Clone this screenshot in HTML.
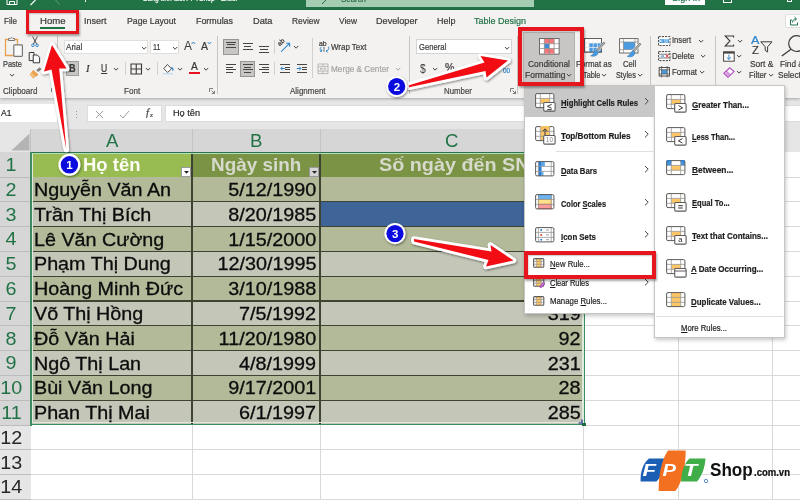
<!DOCTYPE html>
<html lang="vi"><head><meta charset="utf-8"><title>Excel - Conditional Formatting</title>
<style>
html,body{margin:0;padding:0;background:#fff}
#app{position:relative;width:800px;height:500px;overflow:hidden;background:#fff;will-change:transform;font-family:"Liberation Sans",sans-serif}
#app div{box-sizing:border-box}
u{text-decoration:underline;text-underline-offset:1px}
</style></head><body><div id="app">
<div style="position:absolute;left:0px;top:97px;width:800px;height:32px;background:#e6e6e6;"></div>
<div style="position:absolute;left:0px;top:0px;width:800px;height:10px;background:#217346;"></div>
<div style="position:absolute;left:306px;top:0px;width:228px;height:7px;background:#a5cdb4;"></div>
<div style="position:absolute;left:665px;top:0px;width:40px;height:4.5px;background:#fff;"></div>
<div style="position:absolute;left:0px;top:10px;width:800px;height:87.5px;background:#f3f2f1;box-shadow:0 1px 3px rgba(0,0,0,.28);"></div>
<div style="position:absolute;left:0px;top:104px;width:57px;height:18px;background:#fff;"></div>
<div style="position:absolute;left:87px;top:105px;width:75px;height:17px;background:#fff;border:1px solid #dcdcdc;"></div>
<div style="position:absolute;left:165px;top:105px;width:640px;height:17px;background:#fff;border:1px solid #dcdcdc;"></div>
<div style="position:absolute;top:108.37px;font-size:9.6px;line-height:9.6px;color:#2b2a29;white-space:nowrap;-webkit-text-stroke:0.22px #2b2a29;left:1.00px;transform-origin:0 0;transform:scaleX(0.8942);">A1</div>
<div style="position:absolute;left:75.8px;top:110.5px;width:1.2px;height:1.2px;background:#9a9a9a;"></div>
<div style="position:absolute;left:75.8px;top:113.5px;width:1.2px;height:1.2px;background:#9a9a9a;"></div>
<div style="position:absolute;left:75.8px;top:116.5px;width:1.2px;height:1.2px;background:#9a9a9a;"></div>
<svg style="position:absolute;left:95px;top:110px;" width="9" height="9" viewBox="0 0 9 9"><path d="M1,1 L8,8 M8,1 L1,8" stroke="#9d9d9d" stroke-width="1" fill="none"/></svg>
<svg style="position:absolute;left:119px;top:110px;" width="11" height="9" viewBox="0 0 11 9"><path d="M1,5 L4,8 L10,1" stroke="#9d9d9d" stroke-width="1" fill="none"/></svg>
<div style="position:absolute;top:108.11px;font-size:10.5px;line-height:10.5px;color:#444;white-space:nowrap;-webkit-text-stroke:0.22px #444;font-style:italic;left:146.00px;transform-origin:0 0;transform:scaleX(1.0008);font-family:'Liberation Serif',serif;">f</div>
<div style="position:absolute;top:112.00px;font-size:6.5px;line-height:6.5px;color:#444;white-space:nowrap;-webkit-text-stroke:0.22px #444;font-style:italic;left:149.50px;transform-origin:0 0;transform:scaleX(1.0008);font-family:'Liberation Serif',serif;">x</div>
<div style="position:absolute;top:107.87px;font-size:9.6px;line-height:9.6px;color:#2b2a29;white-space:nowrap;-webkit-text-stroke:0.22px #2b2a29;left:173.00px;transform-origin:0 0;transform:scaleX(0.9546);">Họ tên</div>
<div style="position:absolute;left:0px;top:129px;width:800px;height:371px;background:#fff;"></div>
<div style="position:absolute;left:0px;top:129px;width:30.5px;height:23px;background:#e6e6e6;"></div>
<div style="position:absolute;left:30.5px;top:129px;width:553.0px;height:23px;background:#d6d6d6;"></div>
<div style="position:absolute;left:583.5px;top:129px;width:216.5px;height:23px;background:#e6e6e6;"></div>
<svg style="position:absolute;left:11px;top:133px;" width="19" height="18" viewBox="0 0 19 18"><polygon points="18.5,0.5 18.5,17.5 0.5,17.5" fill="#b4b4b4"/></svg>
<div style="position:absolute;left:30.0px;top:129px;width:1px;height:23px;background:#c3c3c3;"></div>
<div style="position:absolute;left:191.5px;top:129px;width:1px;height:23px;background:#c3c3c3;"></div>
<div style="position:absolute;left:319.5px;top:129px;width:1px;height:23px;background:#c3c3c3;"></div>
<div style="position:absolute;left:583.0px;top:129px;width:1px;height:23px;background:#c3c3c3;"></div>
<div style="position:absolute;left:677.5px;top:129px;width:1px;height:23px;background:#c3c3c3;"></div>
<div style="position:absolute;left:772.0px;top:129px;width:1px;height:23px;background:#c3c3c3;"></div>
<div style="position:absolute;top:132.46px;font-size:18.6px;line-height:18.6px;color:#217346;white-space:nowrap;left:105.60px;transform-origin:50% 0;transform:scaleX(1.0008);">A</div>
<div style="position:absolute;top:132.46px;font-size:18.6px;line-height:18.6px;color:#217346;white-space:nowrap;left:250.30px;transform-origin:50% 0;transform:scaleX(1.0008);">B</div>
<div style="position:absolute;top:132.46px;font-size:18.6px;line-height:18.6px;color:#217346;white-space:nowrap;left:445.28px;transform-origin:50% 0;transform:scaleX(1.0008);">C</div>
<div style="position:absolute;left:0px;top:152.2px;width:30.5px;height:272.8px;background:#d6d6d6;"></div>
<div style="position:absolute;left:0px;top:425.0px;width:30.5px;height:75.0px;background:#e6e6e6;"></div>
<div style="position:absolute;left:0px;top:176.5px;width:30.5px;height:1px;background:#bdbdbd;"></div>
<div style="position:absolute;top:156.02px;font-size:18.4px;line-height:18.4px;color:#217346;white-space:nowrap;left:6.38px;transform-origin:50% 0;transform:scaleX(1.075);">1</div>
<div style="position:absolute;left:0px;top:201.29999999999998px;width:30.5px;height:1px;background:#bdbdbd;"></div>
<div style="position:absolute;top:180.82px;font-size:18.4px;line-height:18.4px;color:#217346;white-space:nowrap;left:6.38px;transform-origin:50% 0;transform:scaleX(1.075);">2</div>
<div style="position:absolute;left:0px;top:226.1px;width:30.5px;height:1px;background:#bdbdbd;"></div>
<div style="position:absolute;top:205.62px;font-size:18.4px;line-height:18.4px;color:#217346;white-space:nowrap;left:6.38px;transform-origin:50% 0;transform:scaleX(1.075);">3</div>
<div style="position:absolute;left:0px;top:250.89999999999998px;width:30.5px;height:1px;background:#bdbdbd;"></div>
<div style="position:absolute;top:230.42px;font-size:18.4px;line-height:18.4px;color:#217346;white-space:nowrap;left:6.38px;transform-origin:50% 0;transform:scaleX(1.075);">4</div>
<div style="position:absolute;left:0px;top:275.7px;width:30.5px;height:1px;background:#bdbdbd;"></div>
<div style="position:absolute;top:255.22px;font-size:18.4px;line-height:18.4px;color:#217346;white-space:nowrap;left:6.38px;transform-origin:50% 0;transform:scaleX(1.075);">5</div>
<div style="position:absolute;left:0px;top:300.5px;width:30.5px;height:1px;background:#bdbdbd;"></div>
<div style="position:absolute;top:280.02px;font-size:18.4px;line-height:18.4px;color:#217346;white-space:nowrap;left:6.38px;transform-origin:50% 0;transform:scaleX(1.075);">6</div>
<div style="position:absolute;left:0px;top:325.29999999999995px;width:30.5px;height:1px;background:#bdbdbd;"></div>
<div style="position:absolute;top:304.82px;font-size:18.4px;line-height:18.4px;color:#217346;white-space:nowrap;left:6.38px;transform-origin:50% 0;transform:scaleX(1.075);">7</div>
<div style="position:absolute;left:0px;top:350.1px;width:30.5px;height:1px;background:#bdbdbd;"></div>
<div style="position:absolute;top:329.62px;font-size:18.4px;line-height:18.4px;color:#217346;white-space:nowrap;left:6.38px;transform-origin:50% 0;transform:scaleX(1.075);">8</div>
<div style="position:absolute;left:0px;top:374.9px;width:30.5px;height:1px;background:#bdbdbd;"></div>
<div style="position:absolute;top:354.42px;font-size:18.4px;line-height:18.4px;color:#217346;white-space:nowrap;left:6.38px;transform-origin:50% 0;transform:scaleX(1.075);">9</div>
<div style="position:absolute;left:0px;top:399.7px;width:30.5px;height:1px;background:#bdbdbd;"></div>
<div style="position:absolute;top:379.22px;font-size:18.4px;line-height:18.4px;color:#217346;white-space:nowrap;left:1.27px;transform-origin:50% 0;transform:scaleX(1.075);">10</div>
<div style="position:absolute;left:0px;top:424.5px;width:30.5px;height:1px;background:#bdbdbd;"></div>
<div style="position:absolute;top:404.02px;font-size:18.4px;line-height:18.4px;color:#217346;white-space:nowrap;left:1.95px;transform-origin:50% 0;transform:scaleX(1.075);">11</div>
<div style="position:absolute;left:0px;top:449.3px;width:30.5px;height:1px;background:#bdbdbd;"></div>
<div style="position:absolute;top:428.82px;font-size:18.4px;line-height:18.4px;color:#262626;white-space:nowrap;left:1.27px;transform-origin:50% 0;transform:scaleX(1.075);">12</div>
<div style="position:absolute;left:0px;top:474.1px;width:30.5px;height:1px;background:#bdbdbd;"></div>
<div style="position:absolute;top:453.62px;font-size:18.4px;line-height:18.4px;color:#262626;white-space:nowrap;left:1.27px;transform-origin:50% 0;transform:scaleX(1.075);">13</div>
<div style="position:absolute;left:0px;top:498.9px;width:30.5px;height:1px;background:#bdbdbd;"></div>
<div style="position:absolute;top:478.42px;font-size:18.4px;line-height:18.4px;color:#262626;white-space:nowrap;left:1.27px;transform-origin:50% 0;transform:scaleX(1.075);">14</div>
<div style="position:absolute;left:583.5px;top:176.5px;width:216.5px;height:1px;background:#d9d9d9;"></div>
<div style="position:absolute;left:583.5px;top:201.29999999999998px;width:216.5px;height:1px;background:#d9d9d9;"></div>
<div style="position:absolute;left:583.5px;top:226.1px;width:216.5px;height:1px;background:#d9d9d9;"></div>
<div style="position:absolute;left:583.5px;top:250.89999999999998px;width:216.5px;height:1px;background:#d9d9d9;"></div>
<div style="position:absolute;left:583.5px;top:275.7px;width:216.5px;height:1px;background:#d9d9d9;"></div>
<div style="position:absolute;left:583.5px;top:300.5px;width:216.5px;height:1px;background:#d9d9d9;"></div>
<div style="position:absolute;left:583.5px;top:325.29999999999995px;width:216.5px;height:1px;background:#d9d9d9;"></div>
<div style="position:absolute;left:583.5px;top:350.1px;width:216.5px;height:1px;background:#d9d9d9;"></div>
<div style="position:absolute;left:583.5px;top:374.9px;width:216.5px;height:1px;background:#d9d9d9;"></div>
<div style="position:absolute;left:583.5px;top:399.7px;width:216.5px;height:1px;background:#d9d9d9;"></div>
<div style="position:absolute;left:583.5px;top:424.5px;width:216.5px;height:1px;background:#d9d9d9;"></div>
<div style="position:absolute;left:583.5px;top:449.3px;width:216.5px;height:1px;background:#d9d9d9;"></div>
<div style="position:absolute;left:583.5px;top:474.1px;width:216.5px;height:1px;background:#d9d9d9;"></div>
<div style="position:absolute;left:583.5px;top:498.9px;width:216.5px;height:1px;background:#d9d9d9;"></div>
<div style="position:absolute;left:30.5px;top:449.3px;width:553.0px;height:1px;background:#d9d9d9;"></div>
<div style="position:absolute;left:30.5px;top:474.1px;width:553.0px;height:1px;background:#d9d9d9;"></div>
<div style="position:absolute;left:30.5px;top:498.9px;width:553.0px;height:1px;background:#d9d9d9;"></div>
<div style="position:absolute;left:677.5px;top:152px;width:1px;height:348px;background:#d9d9d9;"></div>
<div style="position:absolute;left:772.0px;top:152px;width:1px;height:348px;background:#d9d9d9;"></div>
<div style="position:absolute;left:191.5px;top:425.0px;width:1px;height:75.0px;background:#d9d9d9;"></div>
<div style="position:absolute;left:319.5px;top:425.0px;width:1px;height:75.0px;background:#d9d9d9;"></div>
<div style="position:absolute;left:583.0px;top:425.0px;width:1px;height:75.0px;background:#d9d9d9;"></div>
<div style="position:absolute;left:31px;top:152.2px;width:161px;height:24.8px;background:#98bc52;"></div>
<div style="position:absolute;left:192px;top:152.2px;width:391.5px;height:24.8px;background:#7a9345;"></div>
<div style="position:absolute;left:31px;top:177.0px;width:552.5px;height:25.0px;background:#b2ba99;"></div>
<div style="position:absolute;left:31px;top:201.79999999999998px;width:552.5px;height:25.0px;background:#c4c6b8;"></div>
<div style="position:absolute;left:31px;top:226.6px;width:552.5px;height:25.0px;background:#b2ba99;"></div>
<div style="position:absolute;left:31px;top:251.39999999999998px;width:552.5px;height:25.0px;background:#c4c6b8;"></div>
<div style="position:absolute;left:31px;top:276.2px;width:552.5px;height:25.0px;background:#b2ba99;"></div>
<div style="position:absolute;left:31px;top:301.0px;width:552.5px;height:25.0px;background:#c4c6b8;"></div>
<div style="position:absolute;left:31px;top:325.79999999999995px;width:552.5px;height:25.0px;background:#b2ba99;"></div>
<div style="position:absolute;left:31px;top:350.6px;width:552.5px;height:25.0px;background:#c4c6b8;"></div>
<div style="position:absolute;left:31px;top:375.4px;width:552.5px;height:25.0px;background:#b2ba99;"></div>
<div style="position:absolute;left:31px;top:400.2px;width:552.5px;height:25.0px;background:#c4c6b8;"></div>
<div style="position:absolute;left:320px;top:201.79999999999998px;width:263.5px;height:24.8px;background:#3e6498;"></div>
<div style="position:absolute;left:31px;top:201.2px;width:552.5px;height:1.2px;background:#3d4432;"></div>
<div style="position:absolute;left:31px;top:226.0px;width:552.5px;height:1.2px;background:#3d4432;"></div>
<div style="position:absolute;left:31px;top:250.79999999999998px;width:552.5px;height:1.2px;background:#3d4432;"></div>
<div style="position:absolute;left:31px;top:275.59999999999997px;width:552.5px;height:1.2px;background:#3d4432;"></div>
<div style="position:absolute;left:31px;top:300.4px;width:552.5px;height:1.2px;background:#3d4432;"></div>
<div style="position:absolute;left:31px;top:325.19999999999993px;width:552.5px;height:1.2px;background:#3d4432;"></div>
<div style="position:absolute;left:31px;top:350.0px;width:552.5px;height:1.2px;background:#3d4432;"></div>
<div style="position:absolute;left:31px;top:374.79999999999995px;width:552.5px;height:1.2px;background:#3d4432;"></div>
<div style="position:absolute;left:31px;top:399.59999999999997px;width:552.5px;height:1.2px;background:#3d4432;"></div>
<div style="position:absolute;left:191.4px;top:152.2px;width:1.3px;height:272.8px;background:#3d4432;"></div>
<div style="position:absolute;left:319.4px;top:152.2px;width:1.3px;height:272.8px;background:#3d4432;"></div>
<div style="position:absolute;left:32px;top:153.1px;width:550.2px;height:1.0px;background:#b4dfb6;"></div>
<div style="position:absolute;left:32px;top:154.1px;width:1.2px;height:269.40000000000003px;background:#dfe9dc;"></div>
<div style="position:absolute;left:32px;top:422.3px;width:550.2px;height:1.2px;background:#dfe9dc;"></div>
<div style="position:absolute;left:582.1px;top:154.1px;width:1.6px;height:269.40000000000003px;background:#dfe9dc;"></div>
<div style="position:absolute;left:30.2px;top:152.0px;width:554.8px;height:1.2px;background:#2c7450;"></div>
<div style="position:absolute;left:30.2px;top:152.0px;width:1.8px;height:273.5px;background:#3c8c61;"></div>
<div style="position:absolute;left:30.2px;top:423.6px;width:554.8px;height:1.8px;background:#3c8c61;"></div>
<div style="position:absolute;left:583.7px;top:152.0px;width:1.3px;height:273.5px;background:#3c8c61;"></div>
<div style="position:absolute;left:581.8px;top:422.8px;width:4px;height:3.6px;background:#1d6b41;"></div>
<svg style="position:absolute;left:577.5px;top:419.0px;" width="5" height="5" viewBox="0 0 5 5"><path d="M4,0.5 V4 H0.5" fill="none" stroke="#1f2f8f" stroke-width="1.2"/></svg>
<div style="position:absolute;top:156.22px;font-size:18.4px;line-height:18.4px;color:#fdfdf4;white-space:nowrap;font-weight:bold;left:82.75px;transform-origin:0 0;transform:scaleX(1.0045);">Họ tên</div>
<div style="position:absolute;top:156.22px;font-size:18.4px;line-height:18.4px;color:#d6d9cb;white-space:nowrap;font-weight:bold;left:211.00px;transform-origin:0 0;transform:scaleX(1.0269);">Ngày sinh</div>
<div style="position:absolute;top:156.22px;font-size:18.4px;line-height:18.4px;color:#d6d9cb;white-space:nowrap;font-weight:bold;left:379.00px;transform-origin:0 0;transform:scaleX(1.075);">Số ngày đến SN</div>
<div style="position:absolute;left:180.5px;top:166.7px;width:10.8px;height:10.4px;background:#fcfcfc;border:0.6px solid #9a9a9a;"></div>
<svg style="position:absolute;left:183.5px;top:171px;" width="5" height="3" viewBox="0 0 5 3"><polygon points="0,0 5,0 2.5,2.8" fill="#222"/></svg>
<div style="position:absolute;left:308.5px;top:166.7px;width:10.8px;height:10.4px;background:#d4d4d4;border:0.6px solid #9a9a9a;"></div>
<svg style="position:absolute;left:311.5px;top:171px;" width="5" height="3" viewBox="0 0 5 3"><polygon points="0,0 5,0 2.5,2.8" fill="#222"/></svg>
<div style="position:absolute;top:180.94px;font-size:18.5px;line-height:18.5px;color:#0c0c0c;white-space:nowrap;left:34.20px;transform-origin:0 0;transform:scaleX(1.066);-webkit-text-stroke:0.3px #0c0c0c;">Nguyễn Văn An</div>
<div style="position:absolute;top:180.94px;font-size:18.5px;line-height:18.5px;color:#0c0c0c;white-space:nowrap;right:483.60px;transform-origin:100% 0;transform:scaleX(1.07);-webkit-text-stroke:0.3px #0c0c0c;">5/12/1990</div>
<div style="position:absolute;top:205.74px;font-size:18.5px;line-height:18.5px;color:#0c0c0c;white-space:nowrap;left:34.20px;transform-origin:0 0;transform:scaleX(1.066);-webkit-text-stroke:0.3px #0c0c0c;">Trần Thị Bích</div>
<div style="position:absolute;top:205.74px;font-size:18.5px;line-height:18.5px;color:#0c0c0c;white-space:nowrap;right:483.60px;transform-origin:100% 0;transform:scaleX(1.07);-webkit-text-stroke:0.3px #0c0c0c;">8/20/1985</div>
<div style="position:absolute;top:230.54px;font-size:18.5px;line-height:18.5px;color:#0c0c0c;white-space:nowrap;left:34.20px;transform-origin:0 0;transform:scaleX(1.066);-webkit-text-stroke:0.3px #0c0c0c;">Lê Văn Cường</div>
<div style="position:absolute;top:230.54px;font-size:18.5px;line-height:18.5px;color:#0c0c0c;white-space:nowrap;right:483.60px;transform-origin:100% 0;transform:scaleX(1.07);-webkit-text-stroke:0.3px #0c0c0c;">1/15/2000</div>
<div style="position:absolute;top:255.34px;font-size:18.5px;line-height:18.5px;color:#0c0c0c;white-space:nowrap;left:34.20px;transform-origin:0 0;transform:scaleX(1.066);-webkit-text-stroke:0.3px #0c0c0c;">Phạm Thị Dung</div>
<div style="position:absolute;top:255.34px;font-size:18.5px;line-height:18.5px;color:#0c0c0c;white-space:nowrap;right:483.60px;transform-origin:100% 0;transform:scaleX(1.07);-webkit-text-stroke:0.3px #0c0c0c;">12/30/1995</div>
<div style="position:absolute;top:280.14px;font-size:18.5px;line-height:18.5px;color:#0c0c0c;white-space:nowrap;left:34.20px;transform-origin:0 0;transform:scaleX(1.066);-webkit-text-stroke:0.3px #0c0c0c;">Hoàng Minh Đức</div>
<div style="position:absolute;top:280.14px;font-size:18.5px;line-height:18.5px;color:#0c0c0c;white-space:nowrap;right:483.60px;transform-origin:100% 0;transform:scaleX(1.07);-webkit-text-stroke:0.3px #0c0c0c;">3/10/1988</div>
<div style="position:absolute;top:304.94px;font-size:18.5px;line-height:18.5px;color:#0c0c0c;white-space:nowrap;left:34.20px;transform-origin:0 0;transform:scaleX(1.066);-webkit-text-stroke:0.3px #0c0c0c;">Võ Thị Hồng</div>
<div style="position:absolute;top:304.94px;font-size:18.5px;line-height:18.5px;color:#0c0c0c;white-space:nowrap;right:483.60px;transform-origin:100% 0;transform:scaleX(1.07);-webkit-text-stroke:0.3px #0c0c0c;">7/5/1992</div>
<div style="position:absolute;top:304.94px;font-size:18.5px;line-height:18.5px;color:#0c0c0c;white-space:nowrap;right:219.50px;transform-origin:100% 0;transform:scaleX(1.07);-webkit-text-stroke:0.3px #0c0c0c;">319</div>
<div style="position:absolute;top:329.74px;font-size:18.5px;line-height:18.5px;color:#0c0c0c;white-space:nowrap;left:34.20px;transform-origin:0 0;transform:scaleX(1.066);-webkit-text-stroke:0.3px #0c0c0c;">Đỗ Văn Hải</div>
<div style="position:absolute;top:329.74px;font-size:18.5px;line-height:18.5px;color:#0c0c0c;white-space:nowrap;right:483.60px;transform-origin:100% 0;transform:scaleX(1.07);-webkit-text-stroke:0.3px #0c0c0c;">11/20/1980</div>
<div style="position:absolute;top:329.74px;font-size:18.5px;line-height:18.5px;color:#0c0c0c;white-space:nowrap;right:219.50px;transform-origin:100% 0;transform:scaleX(1.07);-webkit-text-stroke:0.3px #0c0c0c;">92</div>
<div style="position:absolute;top:354.54px;font-size:18.5px;line-height:18.5px;color:#0c0c0c;white-space:nowrap;left:34.20px;transform-origin:0 0;transform:scaleX(1.066);-webkit-text-stroke:0.3px #0c0c0c;">Ngô Thị Lan</div>
<div style="position:absolute;top:354.54px;font-size:18.5px;line-height:18.5px;color:#0c0c0c;white-space:nowrap;right:483.60px;transform-origin:100% 0;transform:scaleX(1.07);-webkit-text-stroke:0.3px #0c0c0c;">4/8/1999</div>
<div style="position:absolute;top:354.54px;font-size:18.5px;line-height:18.5px;color:#0c0c0c;white-space:nowrap;right:219.50px;transform-origin:100% 0;transform:scaleX(1.07);-webkit-text-stroke:0.3px #0c0c0c;">231</div>
<div style="position:absolute;top:379.34px;font-size:18.5px;line-height:18.5px;color:#0c0c0c;white-space:nowrap;left:34.20px;transform-origin:0 0;transform:scaleX(1.066);-webkit-text-stroke:0.3px #0c0c0c;">Bùi Văn Long</div>
<div style="position:absolute;top:379.34px;font-size:18.5px;line-height:18.5px;color:#0c0c0c;white-space:nowrap;right:483.60px;transform-origin:100% 0;transform:scaleX(1.07);-webkit-text-stroke:0.3px #0c0c0c;">9/17/2001</div>
<div style="position:absolute;top:379.34px;font-size:18.5px;line-height:18.5px;color:#0c0c0c;white-space:nowrap;right:219.50px;transform-origin:100% 0;transform:scaleX(1.07);-webkit-text-stroke:0.3px #0c0c0c;">28</div>
<div style="position:absolute;top:404.14px;font-size:18.5px;line-height:18.5px;color:#0c0c0c;white-space:nowrap;left:34.20px;transform-origin:0 0;transform:scaleX(1.066);-webkit-text-stroke:0.3px #0c0c0c;">Phan Thị Mai</div>
<div style="position:absolute;top:404.14px;font-size:18.5px;line-height:18.5px;color:#0c0c0c;white-space:nowrap;right:483.60px;transform-origin:100% 0;transform:scaleX(1.07);-webkit-text-stroke:0.3px #0c0c0c;">6/1/1997</div>
<div style="position:absolute;top:404.14px;font-size:18.5px;line-height:18.5px;color:#0c0c0c;white-space:nowrap;right:219.50px;transform-origin:100% 0;transform:scaleX(1.07);-webkit-text-stroke:0.3px #0c0c0c;">285</div>
<div style="position:absolute;top:-6.53px;font-size:9.6px;line-height:9.6px;color:#fff;white-space:nowrap;-webkit-text-stroke:0.22px #fff;left:143.00px;transform-origin:0 0;transform:scaleX(0.7010);">Bảng tính test FPTShop  -  Excel</div>
<div style="position:absolute;top:-6.13px;font-size:9.6px;line-height:9.6px;color:#2b6a48;white-space:nowrap;-webkit-text-stroke:0.22px #2b6a48;left:341.00px;transform-origin:0 0;transform:scaleX(0.8219);">Search</div>
<div style="position:absolute;top:-7.13px;font-size:9.6px;line-height:9.6px;color:#217346;white-space:nowrap;-webkit-text-stroke:0.22px #217346;left:672.00px;transform-origin:0 0;transform:scaleX(0.9539);">Sign in</div>
<svg style="position:absolute;left:6px;top:0px;" width="13" height="6" viewBox="0 0 13 6"><path d="M1,-3 H11 V4.5 H1 Z M3.5,4.5 V1.5 H8.5 V4.5" fill="none" stroke="#fff" stroke-width="1"/></svg>
<svg style="position:absolute;left:29px;top:0px;" width="9" height="6" viewBox="0 0 9 6"><path d="M1.5,5 L6.5,0" stroke="#fff" stroke-width="1.1" fill="none"/></svg>
<svg style="position:absolute;left:54px;top:0px;" width="8" height="6" viewBox="0 0 8 6"><path d="M1.5,0 L5.5,4.5" stroke="#5b9a78" stroke-width="1" fill="none"/></svg>
<div style="position:absolute;left:85px;top:0px;width:1.3px;height:2px;background:#fff;"></div>
<svg style="position:absolute;left:321px;top:0px;" width="8" height="5" viewBox="0 0 8 5"><path d="M1,4 L5,0" stroke="#2b6a48" stroke-width="1" fill="none"/></svg>
<div style="position:absolute;left:723px;top:0px;width:9px;height:3px;background:none;border:1px solid #fff;border-top:none;"></div>
<div style="position:absolute;left:787px;top:0px;width:5px;height:2px;background:none;border:1px solid #fff;border-top:none;"></div>
<div style="position:absolute;top:15.70px;font-size:9.8px;line-height:9.8px;color:#3b3a39;white-space:nowrap;-webkit-text-stroke:0.22px #3b3a39;left:4.00px;transform-origin:0 0;transform:scaleX(0.8232);">File</div>
<div style="position:absolute;top:15.70px;font-size:9.8px;line-height:9.8px;color:#3b3a39;white-space:nowrap;-webkit-text-stroke:0.22px #3b3a39;left:39.50px;transform-origin:0 0;transform:scaleX(0.9754);">Home</div>
<div style="position:absolute;top:15.70px;font-size:9.8px;line-height:9.8px;color:#3b3a39;white-space:nowrap;-webkit-text-stroke:0.22px #3b3a39;left:83.50px;transform-origin:0 0;transform:scaleX(0.9180);">Insert</div>
<div style="position:absolute;top:15.70px;font-size:9.8px;line-height:9.8px;color:#3b3a39;white-space:nowrap;-webkit-text-stroke:0.22px #3b3a39;left:127.00px;transform-origin:0 0;transform:scaleX(0.8903);">Page Layout</div>
<div style="position:absolute;top:15.70px;font-size:9.8px;line-height:9.8px;color:#3b3a39;white-space:nowrap;-webkit-text-stroke:0.22px #3b3a39;left:196.00px;transform-origin:0 0;transform:scaleX(0.9059);">Formulas</div>
<div style="position:absolute;top:15.70px;font-size:9.8px;line-height:9.8px;color:#3b3a39;white-space:nowrap;-webkit-text-stroke:0.22px #3b3a39;left:253.00px;transform-origin:0 0;transform:scaleX(0.9420);">Data</div>
<div style="position:absolute;top:15.70px;font-size:9.8px;line-height:9.8px;color:#3b3a39;white-space:nowrap;-webkit-text-stroke:0.22px #3b3a39;left:291.50px;transform-origin:0 0;transform:scaleX(0.8558);">Review</div>
<div style="position:absolute;top:15.70px;font-size:9.8px;line-height:9.8px;color:#3b3a39;white-space:nowrap;-webkit-text-stroke:0.22px #3b3a39;left:338.50px;transform-origin:0 0;transform:scaleX(0.8545);">View</div>
<div style="position:absolute;top:15.70px;font-size:9.8px;line-height:9.8px;color:#3b3a39;white-space:nowrap;-webkit-text-stroke:0.22px #3b3a39;left:375.50px;transform-origin:0 0;transform:scaleX(0.9290);">Developer</div>
<div style="position:absolute;top:15.70px;font-size:9.8px;line-height:9.8px;color:#3b3a39;white-space:nowrap;-webkit-text-stroke:0.22px #3b3a39;left:436.50px;transform-origin:0 0;transform:scaleX(0.9178);">Help</div>
<div style="position:absolute;top:15.70px;font-size:9.8px;line-height:9.8px;color:#217346;white-space:nowrap;-webkit-text-stroke:0.22px #217346;left:474.00px;transform-origin:0 0;transform:scaleX(0.9178);">Table Design</div>
<div style="position:absolute;left:39.5px;top:27.3px;width:25.5px;height:2.1px;background:#217346;"></div>
<div style="position:absolute;left:784.5px;top:13.5px;width:16px;height:14px;background:#fff;border:1px solid #e1dfdd;border-right:none;border-radius:2px 0 0 2px;"></div>
<svg style="position:absolute;left:789px;top:16px;" width="10" height="10" viewBox="0 0 10 10"><path d="M3,4 H1.5 V9 H8.5 V6.5 M3.5,6.5 C3.5,4 5,3 7,3 M5.5,1 L7.6,3 L5.5,5" fill="none" stroke="#217346" stroke-width="1"/></svg>
<div style="position:absolute;left:57.3px;top:36px;width:1px;height:58px;background:#c8c6c4;"></div>
<div style="position:absolute;left:217.1px;top:36px;width:1px;height:58px;background:#c8c6c4;"></div>
<div style="position:absolute;left:409.0px;top:36px;width:1px;height:58px;background:#c8c6c4;"></div>
<div style="position:absolute;left:517.0px;top:36px;width:1px;height:58px;background:#c8c6c4;"></div>
<div style="position:absolute;left:650.0px;top:36px;width:1px;height:58px;background:#c8c6c4;"></div>
<div style="position:absolute;left:714.5px;top:36px;width:1px;height:58px;background:#c8c6c4;"></div>
<div style="position:absolute;left:125.0px;top:62px;width:1px;height:13px;background:#d2d0ce;"></div>
<div style="position:absolute;left:156.5px;top:62px;width:1px;height:13px;background:#d2d0ce;"></div>
<div style="position:absolute;left:274.1px;top:40px;width:1px;height:14px;background:#d2d0ce;"></div>
<div style="position:absolute;left:274.1px;top:62px;width:1px;height:13px;background:#d2d0ce;"></div>
<div style="position:absolute;left:312.3px;top:38px;width:1px;height:39.5px;background:#d2d0ce;"></div>
<div style="position:absolute;top:86.07px;font-size:9.6px;line-height:9.6px;color:#484644;white-space:nowrap;-webkit-text-stroke:0.22px #484644;left:2.50px;transform-origin:0 0;transform:scaleX(0.8396);">Clipboard</div>
<div style="position:absolute;top:86.07px;font-size:9.6px;line-height:9.6px;color:#484644;white-space:nowrap;-webkit-text-stroke:0.22px #484644;left:123.80px;transform-origin:0 0;transform:scaleX(0.8433);">Font</div>
<div style="position:absolute;top:86.07px;font-size:9.6px;line-height:9.6px;color:#484644;white-space:nowrap;-webkit-text-stroke:0.22px #484644;left:290.40px;transform-origin:0 0;transform:scaleX(0.8339);">Alignment</div>
<div style="position:absolute;top:86.07px;font-size:9.6px;line-height:9.6px;color:#484644;white-space:nowrap;-webkit-text-stroke:0.22px #484644;left:444.00px;transform-origin:0 0;transform:scaleX(0.8200);">Number</div>
<svg style="position:absolute;left:50.5px;top:88.3px;" width="6" height="6" viewBox="0 0 6 6"><path d="M0.5,4 V0.5 H4 M2.5,2.5 L5.3,5.3 M5.5,2.8 V5.5 H2.8" fill="none" stroke="#605e5c" stroke-width="0.8"/></svg>
<svg style="position:absolute;left:209px;top:88.3px;" width="6" height="6" viewBox="0 0 6 6"><path d="M0.5,4 V0.5 H4 M2.5,2.5 L5.3,5.3 M5.5,2.8 V5.5 H2.8" fill="none" stroke="#605e5c" stroke-width="0.8"/></svg>
<svg style="position:absolute;left:510px;top:88.3px;" width="6" height="6" viewBox="0 0 6 6"><path d="M0.5,4 V0.5 H4 M2.5,2.5 L5.3,5.3 M5.5,2.8 V5.5 H2.8" fill="none" stroke="#605e5c" stroke-width="0.8"/></svg>
<svg style="position:absolute;left:3px;top:35px;" width="22" height="23" viewBox="0 0 22 23"><path d="M2.5,4.5 H14.5 V20.5 H2.5 Z" fill="none" stroke="#e8a04c" stroke-width="1.3"/>
<path d="M5.5,5.5 V3.5 H7.2 A1.6,1.6 0 0 1 10,3.5 H11.6 V5.5 Z" fill="#f3f2f1" stroke="#797775" stroke-width="1"/>
<rect x="10.8" y="9.8" width="8.6" height="11.6" rx="0.8" fill="#fafafa" stroke="#797775" stroke-width="1.2"/></svg>
<div style="position:absolute;top:59.20px;font-size:9.8px;line-height:9.8px;color:#3b3a39;white-space:nowrap;-webkit-text-stroke:0.22px #3b3a39;left:3.00px;transform-origin:0 0;transform:scaleX(0.7582);">Paste</div>
<svg style="position:absolute;left:8.9px;top:72.60000000000001px;" width="6.2" height="4.2" viewBox="0 0 6.2 4.2"><polyline points="1,1 3.1,3.2 5.2,1" fill="none" stroke="#444" stroke-width="1.0"/></svg>
<svg style="position:absolute;left:29.5px;top:36px;" width="10" height="12" viewBox="0 0 10 12"><path d="M2.6,0.5 L6.6,8 M7.4,0.5 L3.4,8" stroke="#3b3a39" stroke-width="0.9" fill="none"/>
<circle cx="2.9" cy="9.3" r="1.3" fill="none" stroke="#2f86c9" stroke-width="1"/><circle cx="7.1" cy="9.3" r="1.3" fill="none" stroke="#2f86c9" stroke-width="1"/></svg>
<svg style="position:absolute;left:28px;top:51px;" width="13" height="13" viewBox="0 0 13 13"><path d="M1.2,1.5 H6 V9.6 H1.2 Z" fill="none" stroke="#3b3a39" stroke-width="1"/>
<path d="M5.2,4 H9.3 L11.6,6.3 V11.8 H5.2 Z" fill="#f8f8f8" stroke="#3b3a39" stroke-width="1"/></svg>
<svg style="position:absolute;left:28.5px;top:67px;" width="13" height="12" viewBox="0 0 13 12"><path d="M7.5,3.2 L10.8,0.8 L12,2.2 L9,4.8" fill="#8a8886" stroke="#605e5c" stroke-width="0.6"/>
<path d="M4.2,3.4 L9,7.6 L6.8,9.2 L2.8,5.2 Z" fill="#f0a44e" stroke="#d98324" stroke-width="0.6"/>
<path d="M2.6,5.6 L6.4,9.6 L4.2,11.2 L0.8,7.2 Z" fill="#f7c184" stroke="#e39a46" stroke-width="0.6"/></svg>
<div style="position:absolute;left:64.4px;top:39.7px;width:84px;height:14.8px;background:#fff;border:0.6px solid #e1dfdd;"></div>
<div style="position:absolute;left:150.4px;top:39.7px;width:28.8px;height:14.8px;background:#fff;border:0.6px solid #e1dfdd;"></div>
<div style="position:absolute;top:42.30px;font-size:9.8px;line-height:9.8px;color:#3b3a39;white-space:nowrap;-webkit-text-stroke:0.22px #3b3a39;left:66.30px;transform-origin:0 0;transform:scaleX(0.8263);">Arial</div>
<div style="position:absolute;top:42.30px;font-size:9.8px;line-height:9.8px;color:#3b3a39;white-space:nowrap;-webkit-text-stroke:0.22px #3b3a39;left:152.50px;transform-origin:0 0;transform:scaleX(0.7175);">11</div>
<svg style="position:absolute;left:140.9px;top:45.5px;" width="6.2" height="4.2" viewBox="0 0 6.2 4.2"><polyline points="1,1 3.1,3.2 5.2,1" fill="none" stroke="#444" stroke-width="1.0"/></svg>
<svg style="position:absolute;left:171.9px;top:45.5px;" width="6.2" height="4.2" viewBox="0 0 6.2 4.2"><polyline points="1,1 3.1,3.2 5.2,1" fill="none" stroke="#444" stroke-width="1.0"/></svg>
<div style="position:absolute;top:39.70px;font-size:12.4px;line-height:12.4px;color:#3b3a39;white-space:nowrap;left:183.60px;transform-origin:0 0;transform:scaleX(0.9551);">A</div>
<svg style="position:absolute;left:190.5px;top:40.5px;" width="5" height="4" viewBox="0 0 5 4"><polyline points="0.6,3 2.4,1 4.2,3" fill="none" stroke="#2f86c9" stroke-width="1"/></svg>
<div style="position:absolute;top:41.06px;font-size:10.8px;line-height:10.8px;color:#3b3a39;white-space:nowrap;-webkit-text-stroke:0.22px #3b3a39;left:201.20px;transform-origin:0 0;transform:scaleX(0.9717);">A</div>
<svg style="position:absolute;left:206.8px;top:41px;" width="5" height="4" viewBox="0 0 5 4"><polyline points="0.6,1 2.4,3 4.2,1" fill="none" stroke="#2f86c9" stroke-width="1"/></svg>
<div style="position:absolute;left:66px;top:60.7px;width:12.6px;height:15.4px;background:#c8c6c4;border:0.6px solid #a19f9d;"></div>
<div style="position:absolute;top:63.43px;font-size:10.6px;line-height:10.6px;color:#3b3a39;white-space:nowrap;-webkit-text-stroke:0.22px #3b3a39;font-weight:bold;left:69.00px;transform-origin:0 0;transform:scaleX(0.8622);">B</div>
<div style="position:absolute;top:63.26px;font-size:10.8px;line-height:10.8px;color:#3b3a39;white-space:nowrap;-webkit-text-stroke:0.22px #3b3a39;font-style:italic;left:85.60px;transform-origin:0 0;transform:scaleX(1.0008);font-family:'Liberation Serif',serif;">I</div>
<div style="position:absolute;top:63.53px;font-size:10px;line-height:10px;color:#3b3a39;white-space:nowrap;-webkit-text-stroke:0.22px #3b3a39;left:100.80px;transform-origin:0 0;transform:scaleX(0.8585);text-decoration:underline;text-underline-offset:1px;">U</div>
<svg style="position:absolute;left:113.4px;top:66.80000000000001px;" width="6.2" height="4.2" viewBox="0 0 6.2 4.2"><polyline points="1,1 3.1,3.2 5.2,1" fill="none" stroke="#444" stroke-width="1.0"/></svg>
<svg style="position:absolute;left:129.5px;top:62.5px;" width="13" height="12" viewBox="0 0 13 12"><path d="M1,1 H11.5 V11 H1 Z M6.25,1 V11 M1,6 H11.5" fill="none" stroke="#3b3a39" stroke-width="1.1"/></svg>
<svg style="position:absolute;left:144.9px;top:66.80000000000001px;" width="6.2" height="4.2" viewBox="0 0 6.2 4.2"><polyline points="1,1 3.1,3.2 5.2,1" fill="none" stroke="#444" stroke-width="1.0"/></svg>
<svg style="position:absolute;left:161.5px;top:62.5px;" width="13" height="12" viewBox="0 0 13 12"><path d="M5.4,1.5 L9.6,5.8 L5.6,9.4 L1.8,5.6 Z" fill="#fdfdfd" stroke="#3b3a39" stroke-width="0.9"/>
<path d="M9.4,4.2 C10.8,5.2 11.4,6.6 10.6,7.8" fill="none" stroke="#2f86c9" stroke-width="1.1"/>
<rect x="0.8" y="10" width="10.4" height="1.4" fill="#bfe0f2"/></svg>
<svg style="position:absolute;left:176.70000000000002px;top:66.80000000000001px;" width="6.2" height="4.2" viewBox="0 0 6.2 4.2"><polyline points="1,1 3.1,3.2 5.2,1" fill="none" stroke="#444" stroke-width="1.0"/></svg>
<div style="position:absolute;top:61.60px;font-size:10.4px;line-height:10.4px;color:#3b3a39;white-space:nowrap;-webkit-text-stroke:0.22px #3b3a39;left:191.20px;transform-origin:0 0;transform:scaleX(0.9802);">A</div>
<div style="position:absolute;left:189px;top:71.6px;width:11px;height:2.2px;background:#e81123;"></div>
<svg style="position:absolute;left:203.3px;top:66.80000000000001px;" width="6.2" height="4.2" viewBox="0 0 6.2 4.2"><polyline points="1,1 3.1,3.2 5.2,1" fill="none" stroke="#444" stroke-width="1.0"/></svg>
<div style="position:absolute;left:223px;top:39px;width:15.6px;height:15.8px;background:#c8c6c4;border:0.6px solid #979593;"></div>
<div style="position:absolute;left:226.0px;top:41.5px;width:10px;height:1.0px;background:#484644;"></div>
<div style="position:absolute;left:227.2px;top:44.4px;width:7.6px;height:1.0px;background:#484644;"></div>
<div style="position:absolute;left:226.0px;top:47.3px;width:10px;height:1.0px;background:#484644;"></div>
<div style="position:absolute;left:242.5px;top:43.1px;width:10px;height:1.0px;background:#484644;"></div>
<div style="position:absolute;left:243.7px;top:46.2px;width:7.6px;height:1.0px;background:#484644;"></div>
<div style="position:absolute;left:242.5px;top:49.3px;width:10px;height:1.0px;background:#484644;"></div>
<div style="position:absolute;left:259.0px;top:45.9px;width:10px;height:1.0px;background:#484644;"></div>
<div style="position:absolute;left:260.2px;top:49.0px;width:7.6px;height:1.0px;background:#484644;"></div>
<div style="position:absolute;left:259.0px;top:52.1px;width:10px;height:1.0px;background:#484644;"></div>
<svg style="position:absolute;left:278px;top:40px;" width="14" height="13" viewBox="0 0 14 13"><path d="M3.2,11.6 L11.2,3.6 M8,3.2 H11.6 V6.8" fill="none" stroke="#2f86c9" stroke-width="1.1"/></svg>
<div style="position:absolute;top:40.81px;font-size:6.6px;line-height:6.6px;color:#3b3a39;white-space:nowrap;-webkit-text-stroke:0.22px #3b3a39;left:281.20px;transform-origin:0 0;transform:scaleX(1.0008);transform-origin:0 100%;transform:rotate(-45deg);">ab</div>
<svg style="position:absolute;left:292.9px;top:45.1px;" width="6.2" height="4.2" viewBox="0 0 6.2 4.2"><polyline points="1,1 3.1,3.2 5.2,1" fill="none" stroke="#444" stroke-width="1.0"/></svg>
<div style="position:absolute;left:226px;top:63.7px;width:10px;height:1.0px;background:#484644;"></div>
<div style="position:absolute;left:226px;top:66.5px;width:6.6px;height:1.0px;background:#484644;"></div>
<div style="position:absolute;left:226px;top:69.3px;width:10px;height:1.0px;background:#484644;"></div>
<div style="position:absolute;left:226px;top:72.1px;width:6.6px;height:1.0px;background:#484644;"></div>
<div style="position:absolute;left:240px;top:61px;width:15.2px;height:15.8px;background:#c8c6c4;border:0.6px solid #979593;"></div>
<div style="position:absolute;left:242.6px;top:63.7px;width:10px;height:1.0px;background:#484644;"></div>
<div style="position:absolute;left:244.29999999999998px;top:66.5px;width:6.6px;height:1.0px;background:#484644;"></div>
<div style="position:absolute;left:242.6px;top:69.3px;width:10px;height:1.0px;background:#484644;"></div>
<div style="position:absolute;left:244.29999999999998px;top:72.1px;width:6.6px;height:1.0px;background:#484644;"></div>
<div style="position:absolute;left:259px;top:63.7px;width:10px;height:1.0px;background:#484644;"></div>
<div style="position:absolute;left:262.4px;top:66.5px;width:6.6px;height:1.0px;background:#484644;"></div>
<div style="position:absolute;left:259px;top:69.3px;width:10px;height:1.0px;background:#484644;"></div>
<div style="position:absolute;left:262.4px;top:72.1px;width:6.6px;height:1.0px;background:#484644;"></div>
<div style="position:absolute;left:280px;top:63.7px;width:10.4px;height:1.0px;background:#484644;"></div>
<div style="position:absolute;left:280px;top:72.1px;width:10.4px;height:1.0px;background:#484644;"></div>
<div style="position:absolute;left:284.8px;top:66.5px;width:5.6px;height:1.0px;background:#484644;"></div>
<div style="position:absolute;left:284.8px;top:69.3px;width:5.6px;height:1.0px;background:#484644;"></div>
<svg style="position:absolute;left:279.5px;top:66px;" width="6" height="5" viewBox="0 0 6 5"><path d="M5.2,2.5 H1 M2.6,0.7 L0.8,2.5 L2.6,4.3" fill="none" stroke="#2f86c9" stroke-width="1"/></svg>
<div style="position:absolute;left:296.7px;top:63.7px;width:10.4px;height:1.0px;background:#484644;"></div>
<div style="position:absolute;left:296.7px;top:72.1px;width:10.4px;height:1.0px;background:#484644;"></div>
<div style="position:absolute;left:301.8px;top:66.5px;width:5.4px;height:1.0px;background:#484644;"></div>
<div style="position:absolute;left:301.8px;top:69.3px;width:5.4px;height:1.0px;background:#484644;"></div>
<svg style="position:absolute;left:296px;top:66px;" width="6" height="5" viewBox="0 0 6 5"><path d="M0.6,2.5 H4.8 M3.2,0.7 L5,2.5 L3.2,4.3" fill="none" stroke="#2f86c9" stroke-width="1"/></svg>
<div style="position:absolute;top:41.04px;font-size:6.8px;line-height:6.8px;color:#3b3a39;white-space:nowrap;-webkit-text-stroke:0.22px #3b3a39;left:319.30px;transform-origin:0 0;transform:scaleX(1.0008);">ab</div>
<svg style="position:absolute;left:318.5px;top:46px;" width="11" height="7" viewBox="0 0 11 7"><path d="M2.2,1 C0.6,2.6 0.8,4.4 2.8,5.2 M2.8,5.2 L1,5.4 M2.8,5.2 L2.4,3.4" fill="none" stroke="#2f86c9" stroke-width="0.9"/>
<path d="M5,0.8 V5.8" stroke="#3b3a39" stroke-width="0.7"/>
<path d="M9.4,0.6 C10.4,2.8 9.6,4.6 7,5.2 M7,5.2 L8.4,3.9 M7,5.2 L8.6,6.2" fill="none" stroke="#2f86c9" stroke-width="0.9"/></svg>
<div style="position:absolute;top:41.90px;font-size:9.8px;line-height:9.8px;color:#3b3a39;white-space:nowrap;-webkit-text-stroke:0.22px #3b3a39;left:330.60px;transform-origin:0 0;transform:scaleX(0.8090);">Wrap Text</div>
<svg style="position:absolute;left:316.5px;top:63px;" width="12" height="12" viewBox="0 0 12 12"><path d="M1,1 H11 V10.6 H1 Z M1,3.6 H11 M1,8 H11 M6,1 V3.6 M6,8 V10.6 M3,5.8 H9 M4.2,4.8 L3,5.8 L4.2,6.8 M7.8,4.8 L9,5.8 L7.8,6.8" fill="none" stroke="#b3b0ad" stroke-width="0.9"/></svg>
<div style="position:absolute;top:63.70px;font-size:9.8px;line-height:9.8px;color:#a6a4a1;white-space:nowrap;-webkit-text-stroke:0.22px #a6a4a1;left:331.00px;transform-origin:0 0;transform:scaleX(0.8384);">Merge &amp; Center</div>
<svg style="position:absolute;left:394.9px;top:67.10000000000001px;" width="6.2" height="4.2" viewBox="0 0 6.2 4.2"><polyline points="1,1 3.1,3.2 5.2,1" fill="none" stroke="#a6a4a1" stroke-width="1.0"/></svg>
<div style="position:absolute;left:416px;top:39.2px;width:96px;height:15px;background:#fff;border:0.6px solid #d6d4d2;"></div>
<div style="position:absolute;top:42.10px;font-size:9.8px;line-height:9.8px;color:#3b3a39;white-space:nowrap;-webkit-text-stroke:0.22px #3b3a39;left:418.80px;transform-origin:0 0;transform:scaleX(0.7801);">General</div>
<svg style="position:absolute;left:503.9px;top:45.5px;" width="6.2" height="4.2" viewBox="0 0 6.2 4.2"><polyline points="1,1 3.1,3.2 5.2,1" fill="none" stroke="#444" stroke-width="1.0"/></svg>
<div style="position:absolute;top:62.50px;font-size:12.4px;line-height:12.4px;color:#3b3a39;white-space:nowrap;left:419.60px;transform-origin:0 0;transform:scaleX(0.8410);">$</div>
<svg style="position:absolute;left:431.9px;top:67.30000000000001px;" width="6.2" height="4.2" viewBox="0 0 6.2 4.2"><polyline points="1,1 3.1,3.2 5.2,1" fill="none" stroke="#444" stroke-width="1.0"/></svg>
<div style="position:absolute;top:63.37px;font-size:10.2px;line-height:10.2px;color:#3b3a39;white-space:nowrap;-webkit-text-stroke:0.22px #3b3a39;left:444.60px;transform-origin:0 0;transform:scaleX(1.0365);">%</div>
<div style="position:absolute;top:67.58px;font-size:6.4px;line-height:6.4px;color:#2f86c9;white-space:nowrap;-webkit-text-stroke:0.22px #2f86c9;left:503.00px;transform-origin:0 0;transform:scaleX(1.0008);">00</div>
<div style="position:absolute;left:522.6px;top:32.4px;width:52.4px;height:52px;background:#c8c6c4;border:0.6px solid #b3b0ad;"></div>
<svg style="position:absolute;left:538.5px;top:37.5px;" width="21" height="17" viewBox="0 0 21 17"><rect x="0.5" y="0.5" width="19.6" height="15.6" fill="#fff" stroke="#605e5c" stroke-width="0.9"/>
<rect x="5.4" y="1" width="9.8" height="4.6" fill="#f4777c"/><rect x="5.4" y="10.6" width="9.8" height="5" fill="#f4777c"/>
<rect x="5.4" y="5.8" width="4.8" height="4.6" fill="#3b8ad8"/>
<path d="M5.4,0.5 V16 M10.3,0.5 V16 M15.2,0.5 V16 M0.5,5.7 H20 M0.5,10.5 H20" stroke="#8a8886" stroke-width="0.7" fill="none"/></svg>
<div style="position:absolute;top:58.70px;font-size:9.8px;line-height:9.8px;color:#3b3a39;white-space:nowrap;-webkit-text-stroke:0.22px #3b3a39;left:527.50px;transform-origin:0 0;transform:scaleX(0.8565);">Conditional</div>
<div style="position:absolute;top:69.70px;font-size:9.8px;line-height:9.8px;color:#3b3a39;white-space:nowrap;-webkit-text-stroke:0.22px #3b3a39;left:524.70px;transform-origin:0 0;transform:scaleX(0.8647);">Formatting</div>
<svg style="position:absolute;left:566.3px;top:72.7px;" width="6.2" height="4.2" viewBox="0 0 6.2 4.2"><polyline points="1,1 3.1,3.2 5.2,1" fill="none" stroke="#444" stroke-width="1.0"/></svg>
<svg style="position:absolute;left:583.5px;top:37.5px;" width="23" height="20" viewBox="0 0 23 20"><rect x="0.5" y="0.5" width="17" height="13.6" fill="#fff" stroke="#605e5c" stroke-width="0.9"/>
<rect x="5" y="5" width="12.4" height="9" fill="#4a9be0"/>
<path d="M5,0.5 V14 M9.2,0.5 V14 M13.4,0.5 V14 M0.5,5 H17.5 M0.5,9.5 H17.5" stroke="#e8e8e8" stroke-width="0.8" fill="none"/>
<rect x="0.5" y="0.5" width="17" height="13.6" fill="none" stroke="#605e5c" stroke-width="0.9"/>
<path d="M20.6,4.6 L12.2,13.6" stroke="#fff" stroke-width="3.4"/><path d="M20.6,4.6 L12.2,13.6" stroke="#605e5c" stroke-width="2.2"/><path d="M20.4,4.8 L12.4,13.4" stroke="#f3f2f1" stroke-width="0.9"/>
<path d="M12.6,12.2 C9.6,12.6 10.4,16.6 6.6,17.8 C10.6,19.2 14.4,17.2 14.2,13.8 Z" fill="#4a9be0" stroke="#2f7cc0" stroke-width="0.6"/></svg>
<div style="position:absolute;top:58.70px;font-size:9.8px;line-height:9.8px;color:#3b3a39;white-space:nowrap;-webkit-text-stroke:0.22px #3b3a39;left:575.80px;transform-origin:0 0;transform:scaleX(0.8093);">Format as</div>
<div style="position:absolute;top:69.70px;font-size:9.8px;line-height:9.8px;color:#3b3a39;white-space:nowrap;-webkit-text-stroke:0.22px #3b3a39;left:583.00px;transform-origin:0 0;transform:scaleX(0.7427);">Table</div>
<svg style="position:absolute;left:601.3px;top:72.7px;" width="6.2" height="4.2" viewBox="0 0 6.2 4.2"><polyline points="1,1 3.1,3.2 5.2,1" fill="none" stroke="#444" stroke-width="1.0"/></svg>
<svg style="position:absolute;left:619px;top:37.5px;" width="24" height="21" viewBox="0 0 24 21"><rect x="0.6" y="0.6" width="18.4" height="14.4" fill="#fff" stroke="#605e5c" stroke-width="0.9"/>
<rect x="4.4" y="4" width="11.6" height="7.6" fill="#4a9be0"/>
<path d="M4.4,0.6 V15 M16,0.6 V15 M0.6,4 H19 M0.6,11.6 H19" stroke="#8a8886" stroke-width="0.7" fill="none"/>
<path d="M21.6,5.6 L13.8,14" stroke="#fff" stroke-width="3.4"/><path d="M21.6,5.6 L13.8,14" stroke="#605e5c" stroke-width="2.2"/><path d="M21.4,5.8 L14,13.8" stroke="#f3f2f1" stroke-width="0.9"/>
<path d="M14.2,12.8 C11.2,13.2 12,17.2 8.2,18.4 C12.2,19.8 16,17.8 15.8,14.4 Z" fill="#4a9be0" stroke="#2f7cc0" stroke-width="0.6"/></svg>
<div style="position:absolute;top:58.70px;font-size:9.8px;line-height:9.8px;color:#3b3a39;white-space:nowrap;-webkit-text-stroke:0.22px #3b3a39;left:623.00px;transform-origin:0 0;transform:scaleX(0.7819);">Cell</div>
<div style="position:absolute;top:69.70px;font-size:9.8px;line-height:9.8px;color:#3b3a39;white-space:nowrap;-webkit-text-stroke:0.22px #3b3a39;left:615.60px;transform-origin:0 0;transform:scaleX(0.7419);">Styles</div>
<svg style="position:absolute;left:636.5px;top:72.7px;" width="6.2" height="4.2" viewBox="0 0 6.2 4.2"><polyline points="1,1 3.1,3.2 5.2,1" fill="none" stroke="#444" stroke-width="1.0"/></svg>
<svg style="position:absolute;left:657.5px;top:35.5px;" width="13" height="10.5" viewBox="0 0 13 10.5"><rect x="0.6" y="0.6" width="11.4" height="9" fill="#fff" stroke="#484644" stroke-width="1" stroke-dasharray="2.2,1"/>
<rect x="1.6" y="3.2" width="9.4" height="3.8" fill="#4a9be0"/><path d="M4.6,5.1 H2.2 M3.2,4 L2.2,5.1 L3.2,6.2 M7,3.2 V7 M9,3.2 V7" stroke="#fff" stroke-width="0.7" fill="none"/></svg>
<div style="position:absolute;top:35.30px;font-size:9.8px;line-height:9.8px;color:#3b3a39;white-space:nowrap;-webkit-text-stroke:0.22px #3b3a39;left:672.00px;transform-origin:0 0;transform:scaleX(0.7752);">Insert</div>
<svg style="position:absolute;left:697.5px;top:38.699999999999996px;" width="6.2" height="4.2" viewBox="0 0 6.2 4.2"><polyline points="1,1 3.1,3.2 5.2,1" fill="none" stroke="#444" stroke-width="1.0"/></svg>
<svg style="position:absolute;left:657.5px;top:51px;" width="13" height="10.5" viewBox="0 0 13 10.5"><rect x="0.6" y="0.6" width="11.4" height="9" fill="#fff" stroke="#484644" stroke-width="1" stroke-dasharray="2.2,1"/>
<path d="M1,3.2 H12 M1,7 H12" stroke="#484644" stroke-width="0.7"/><path d="M2.6,5.1 H5.6 M4.6,4 L5.6,5.1 L4.6,6.2" stroke="#2f86c9" stroke-width="0.8" fill="none"/>
<path d="M7.6,3.4 L10.8,6.8 M10.8,3.4 L7.6,6.8" stroke="#e0383e" stroke-width="1"/></svg>
<div style="position:absolute;top:51.40px;font-size:9.8px;line-height:9.8px;color:#3b3a39;white-space:nowrap;-webkit-text-stroke:0.22px #3b3a39;left:672.00px;transform-origin:0 0;transform:scaleX(0.7872);">Delete</div>
<svg style="position:absolute;left:700.3px;top:54.3px;" width="6.2" height="4.2" viewBox="0 0 6.2 4.2"><polyline points="1,1 3.1,3.2 5.2,1" fill="none" stroke="#444" stroke-width="1.0"/></svg>
<svg style="position:absolute;left:657.5px;top:66.2px;" width="13" height="11.5" viewBox="0 0 13 11.5"><rect x="1.2" y="1.6" width="10.2" height="8.4" fill="#fff" stroke="#484644" stroke-width="1"/>
<rect x="3.6" y="3.8" width="5.6" height="4.2" fill="#4a9be0"/><path d="M3.6,0 V11.5 M9.2,0 V11.5 M1.2,3.8 H11.4 M1.2,8 H11.4" stroke="#484644" stroke-width="0.7" fill="none"/></svg>
<div style="position:absolute;top:66.70px;font-size:9.8px;line-height:9.8px;color:#3b3a39;white-space:nowrap;-webkit-text-stroke:0.22px #3b3a39;left:672.00px;transform-origin:0 0;transform:scaleX(0.8055);">Format</div>
<svg style="position:absolute;left:698.9px;top:69.7px;" width="6.2" height="4.2" viewBox="0 0 6.2 4.2"><polyline points="1,1 3.1,3.2 5.2,1" fill="none" stroke="#444" stroke-width="1.0"/></svg>
<svg style="position:absolute;left:723.5px;top:34.5px;" width="11" height="12" viewBox="0 0 11 12"><path d="M9.6,2.6 V1 H1.2 L6,6 L1.2,11 H9.6 V9.4" fill="none" stroke="#3b3a39" stroke-width="1.1"/></svg>
<svg style="position:absolute;left:736.9px;top:38.699999999999996px;" width="6.2" height="4.2" viewBox="0 0 6.2 4.2"><polyline points="1,1 3.1,3.2 5.2,1" fill="none" stroke="#444" stroke-width="1.0"/></svg>
<svg style="position:absolute;left:722.5px;top:50.5px;" width="12" height="11" viewBox="0 0 12 11"><rect x="0.6" y="0.8" width="10.6" height="9.4" fill="#fff" stroke="#484644" stroke-width="1"/><rect x="0.6" y="0.8" width="10.6" height="1.8" fill="#484644"/>
<path d="M5.9,3.6 V8.4 M3.8,6.4 L5.9,8.4 L8,6.4" stroke="#2f86c9" stroke-width="1" fill="none"/></svg>
<svg style="position:absolute;left:736.1px;top:54.1px;" width="6.2" height="4.2" viewBox="0 0 6.2 4.2"><polyline points="1,1 3.1,3.2 5.2,1" fill="none" stroke="#444" stroke-width="1.0"/></svg>
<svg style="position:absolute;left:722.5px;top:66.8px;" width="12" height="11" viewBox="0 0 12 11"><path d="M6.8,0.8 L11,4.6 L5,10.2 L0.8,6.2 Z" fill="#fff" stroke="#b146c2" stroke-width="1.1"/><path d="M3.2,4.2 L7.4,8" stroke="#b146c2" stroke-width="1.1"/><path d="M1.6,6.2 L5,9.4 L7,7.6 L3.6,4.4 Z" fill="#d9a3e0"/></svg>
<svg style="position:absolute;left:736.1px;top:69.9px;" width="6.2" height="4.2" viewBox="0 0 6.2 4.2"><polyline points="1,1 3.1,3.2 5.2,1" fill="none" stroke="#444" stroke-width="1.0"/></svg>
<div style="position:absolute;top:35.35px;font-size:11.4px;line-height:11.4px;color:#2f86c9;white-space:nowrap;-webkit-text-stroke:0.22px #2f86c9;left:751.20px;transform-origin:0 0;transform:scaleX(1.1047);">A</div>
<div style="position:absolute;top:45.15px;font-size:11.4px;line-height:11.4px;color:#3b3a39;white-space:nowrap;-webkit-text-stroke:0.22px #3b3a39;left:751.60px;transform-origin:0 0;transform:scaleX(0.9765);">Z</div>
<svg style="position:absolute;left:759.5px;top:40.5px;" width="13" height="12" viewBox="0 0 13 12"><path d="M0.8,0.8 H12 L7.6,5.8 V11 L5.2,9.4 V5.8 Z" fill="none" stroke="#3b3a39" stroke-width="1"/></svg>
<div style="position:absolute;top:58.70px;font-size:9.8px;line-height:9.8px;color:#3b3a39;white-space:nowrap;-webkit-text-stroke:0.22px #3b3a39;left:749.60px;transform-origin:0 0;transform:scaleX(0.8592);">Sort &amp;</div>
<div style="position:absolute;top:69.70px;font-size:9.8px;line-height:9.8px;color:#3b3a39;white-space:nowrap;-webkit-text-stroke:0.22px #3b3a39;left:749.00px;transform-origin:0 0;transform:scaleX(0.7990);">Filter</div>
<svg style="position:absolute;left:767.5px;top:72.7px;" width="6.2" height="4.2" viewBox="0 0 6.2 4.2"><polyline points="1,1 3.1,3.2 5.2,1" fill="none" stroke="#444" stroke-width="1.0"/></svg>
<svg style="position:absolute;left:779px;top:33.5px;" width="21" height="24" viewBox="0 0 21 24"><circle cx="17.6" cy="9.6" r="7.9" fill="none" stroke="#3b3a39" stroke-width="1.2"/><path d="M12,15.2 L2.8,22" stroke="#3b3a39" stroke-width="1.3"/></svg>
<div style="position:absolute;top:58.70px;font-size:9.8px;line-height:9.8px;color:#3b3a39;white-space:nowrap;-webkit-text-stroke:0.22px #3b3a39;left:779.80px;transform-origin:0 0;transform:scaleX(0.8367);">Find &amp;</div>
<div style="position:absolute;top:69.70px;font-size:9.8px;line-height:9.8px;color:#3b3a39;white-space:nowrap;-webkit-text-stroke:0.22px #3b3a39;left:777.60px;transform-origin:0 0;transform:scaleX(0.8371);">Select</div>
<div style="position:absolute;left:524px;top:85.3px;width:130.8px;height:228.6px;background:#fff;border:0.8px solid #c8c6c4;box-shadow:1px 2px 4px rgba(0,0,0,.22);"></div>
<div style="position:absolute;left:654.4px;top:84.7px;width:130.2px;height:253.6px;background:#fff;border:0.8px solid #c8c6c4;box-shadow:1px 2px 4px rgba(0,0,0,.22);"></div>
<div style="position:absolute;left:524.8px;top:86px;width:129.4px;height:31px;background:#c8c8c8;"></div>
<div style="position:absolute;left:556px;top:151px;width:98px;height:0.9px;background:#e1dfdd;"></div>
<div style="position:absolute;left:556px;top:252.4px;width:98px;height:0.9px;background:#e1dfdd;"></div>
<div style="position:absolute;left:656px;top:316.4px;width:127px;height:0.9px;background:#e1dfdd;"></div>
<svg style="position:absolute;left:535.2px;top:93.2px;" width="21" height="19" viewBox="0 0 21 19"><rect x="0.6" y="0.6" width="18.3" height="14.0" rx="1.4" fill="#fff"/><rect x="5.3" y="5.4" width="9.4" height="4.9" fill="#fcc566"/><path d="M5.3,0.6 V14.6" stroke="#9a9896" stroke-width="0.8"/><path d="M14.7,0.6 V14.6" stroke="#9a9896" stroke-width="0.8"/><path d="M0.6,5.4 H18.9" stroke="#9a9896" stroke-width="0.8"/><path d="M0.6,10.3 H18.9" stroke="#9a9896" stroke-width="0.8"/><rect x="0.6" y="0.6" width="18.3" height="14.0" rx="1.4" fill="none" stroke="#5c5b5a" stroke-width="1.0"/><rect x="8.7" y="9.5" width="11.4" height="8.6" rx="1.1" fill="#fff" stroke="#5c5b5a" stroke-width="1.1"/><path d="M16.6,11.4 L12.4,13.3 L16.6,15.2 M12.4,16.6 H16.6" fill="none" stroke="#2b2a29" stroke-width="0.95"/></svg>
<svg style="position:absolute;left:535.2px;top:126.2px;" width="21" height="19" viewBox="0 0 21 19"><rect x="0.6" y="0.6" width="18.3" height="14.0" rx="1.4" fill="#fff"/><rect x="5.3" y="0.6" width="9.4" height="14" fill="#fcc566"/><path d="M5.3,0.6 V14.6" stroke="#9a9896" stroke-width="0.8"/><path d="M14.7,0.6 V14.6" stroke="#9a9896" stroke-width="0.8"/><path d="M0.6,5.4 H18.9" stroke="#9a9896" stroke-width="0.8"/><path d="M0.6,10.3 H18.9" stroke="#9a9896" stroke-width="0.8"/><rect x="0.6" y="0.6" width="18.3" height="14.0" rx="1.4" fill="none" stroke="#5c5b5a" stroke-width="1.0"/><path d="M5.3,0.6 H14.7" stroke="#fcc566" stroke-width="1.2"/><path d="M10,9 V3 M7.6,5.3 L10,2.8 L12.4,5.3" stroke="#3b3a39" stroke-width="1" fill="none"/><rect x="8.7" y="9.5" width="11.4" height="8.6" rx="1.1" fill="#fff" stroke="#5c5b5a" stroke-width="1.1"/><text x="14.4" y="16.3" font-family="Liberation Sans, sans-serif" font-size="6.4" text-anchor="middle" fill="#8a8886">10</text></svg>
<svg style="position:absolute;left:535.2px;top:161px;" width="21" height="16.5" viewBox="0 0 21 16.5"><rect x="0.6" y="0.6" width="18.3" height="14.3" rx="1.4" fill="#fff"/><rect x="3.4" y="0.8" width="6.4" height="4.6" fill="#5fa8ea"/><rect x="3.4" y="5.4" width="3.4" height="5" fill="#5fa8ea"/><rect x="3.4" y="10.4" width="5" height="4.4" fill="#5fa8ea"/><rect x="3.4" y="0.8" width="2.6" height="14" fill="#2b7cd3"/><path d="M3.4,0.6 V14.9" stroke="#9a9896" stroke-width="0.8"/><path d="M16.2,0.6 V14.9" stroke="#9a9896" stroke-width="0.8"/><path d="M0.6,5.4 H18.9" stroke="#9a9896" stroke-width="0.8"/><path d="M0.6,10.4 H18.9" stroke="#9a9896" stroke-width="0.8"/><rect x="0.6" y="0.6" width="18.3" height="14.3" rx="1.4" fill="none" stroke="#5c5b5a" stroke-width="1.0"/></svg>
<svg style="position:absolute;left:535.2px;top:194px;" width="21" height="16.5" viewBox="0 0 21 16.5"><rect x="0.6" y="0.6" width="18.3" height="14.3" rx="1.4" fill="#fff"/><rect x="3.4" y="0.8" width="12.8" height="4.8" fill="#6db3f2" stroke="#2b7cd3" stroke-width="0.6"/><rect x="3.4" y="5.6" width="12.8" height="4.6" fill="#fde08a" stroke="#f0a030" stroke-width="0.6"/><rect x="3.4" y="10.2" width="12.8" height="4.6" fill="#ff9a9a" stroke="#d04848" stroke-width="0.6"/><path d="M3.4,0.6 V14.9" stroke="#9a9896" stroke-width="0.8"/><path d="M16.2,0.6 V14.9" stroke="#9a9896" stroke-width="0.8"/><path d="M0.6,5.4 H18.9" stroke="#9a9896" stroke-width="0.8"/><path d="M0.6,10.4 H18.9" stroke="#9a9896" stroke-width="0.8"/><rect x="0.6" y="0.6" width="18.3" height="14.3" rx="1.4" fill="none" stroke="#5c5b5a" stroke-width="1.0"/></svg>
<svg style="position:absolute;left:535.2px;top:227px;" width="21" height="16.5" viewBox="0 0 21 16.5"><rect x="0.6" y="0.6" width="18.3" height="14.3" rx="1.4" fill="#fff"/><path d="M3.4,0.6 V14.9" stroke="#9a9896" stroke-width="0.8"/><path d="M16.2,0.6 V14.9" stroke="#9a9896" stroke-width="0.8"/><path d="M0.6,5.4 H18.9" stroke="#9a9896" stroke-width="0.8"/><path d="M0.6,10.4 H18.9" stroke="#9a9896" stroke-width="0.8"/><rect x="0.6" y="0.6" width="18.3" height="14.3" rx="1.4" fill="none" stroke="#5c5b5a" stroke-width="1.0"/><circle cx="6.2" cy="3" r="1" fill="#2b7cd3"/><circle cx="6.2" cy="7.9" r="1" fill="#e0383e"/><circle cx="6.2" cy="12.7" r="1" fill="#2b7cd3"/><path d="M11,3 H14 M11,7.9 H14 M11,12.7 H14" stroke="#8a8886" stroke-width="0.8"/></svg>
<svg style="position:absolute;left:532.6px;top:258.2px;" width="12.5" height="11" viewBox="0 0 12.5 11"><rect x="0.6" y="0.6" width="10.2" height="8.6" rx="1" fill="#fff"/><rect x="3.2" y="0.6" width="5" height="8.6" fill="#fcc566"/><path d="M3.2,0.6 V9.2 M8.2,0.6 V9.2 M0.6,3.4 H10.8 M0.6,6.3 H10.8" stroke="#9a9896" stroke-width="0.7"/><rect x="0.6" y="0.6" width="10.2" height="8.6" rx="1" fill="none" stroke="#5c5b5a" stroke-width="1.1"/></svg>
<svg style="position:absolute;left:532.6px;top:277.2px;" width="12.5" height="11" viewBox="0 0 12.5 11"><rect x="0.6" y="0.6" width="10.2" height="8.6" rx="1" fill="#fff"/><rect x="3.2" y="0.6" width="5" height="8.6" fill="#fcc566"/><path d="M3.2,0.6 V9.2 M8.2,0.6 V9.2 M0.6,3.4 H10.8 M0.6,6.3 H10.8" stroke="#9a9896" stroke-width="0.7"/><rect x="0.6" y="0.6" width="10.2" height="8.6" rx="1" fill="none" stroke="#5c5b5a" stroke-width="1.1"/><path d="M6.4,9.8 L10.6,5 L12,6.4 L8,11 Z" fill="#c26bd0" stroke="#8e3aa3" stroke-width="0.6"/></svg>
<svg style="position:absolute;left:532.6px;top:296px;" width="12.5" height="11" viewBox="0 0 12.5 11"><rect x="0.6" y="0.6" width="10.2" height="8.6" rx="1" fill="#fff"/><rect x="3.2" y="0.6" width="5" height="8.6" fill="#fcc566"/><path d="M3.2,0.6 V9.2 M8.2,0.6 V9.2 M0.6,3.4 H10.8 M0.6,6.3 H10.8" stroke="#9a9896" stroke-width="0.7"/><rect x="0.6" y="0.6" width="10.2" height="8.6" rx="1" fill="none" stroke="#5c5b5a" stroke-width="1.1"/></svg>
<div style="position:absolute;top:97.60px;font-size:9.8px;line-height:9.8px;color:#201f1e;white-space:nowrap;-webkit-text-stroke:0.22px #201f1e;font-weight:bold;left:561.00px;transform-origin:0 0;transform:scaleX(0.7856);"><u>H</u>ighlight Cells Rules</div>
<div style="position:absolute;top:130.50px;font-size:9.8px;line-height:9.8px;color:#201f1e;white-space:nowrap;-webkit-text-stroke:0.22px #201f1e;font-weight:bold;left:561.00px;transform-origin:0 0;transform:scaleX(0.8320);"><u>T</u>op/Bottom Rules</div>
<div style="position:absolute;top:165.70px;font-size:9.8px;line-height:9.8px;color:#201f1e;white-space:nowrap;-webkit-text-stroke:0.22px #201f1e;font-weight:bold;left:561.00px;transform-origin:0 0;transform:scaleX(0.7868);"><u>D</u>ata Bars</div>
<div style="position:absolute;top:198.60px;font-size:9.8px;line-height:9.8px;color:#201f1e;white-space:nowrap;-webkit-text-stroke:0.22px #201f1e;font-weight:bold;left:561.00px;transform-origin:0 0;transform:scaleX(0.7580);">Color <u>S</u>cales</div>
<div style="position:absolute;top:231.50px;font-size:9.8px;line-height:9.8px;color:#201f1e;white-space:nowrap;-webkit-text-stroke:0.22px #201f1e;font-weight:bold;left:561.00px;transform-origin:0 0;transform:scaleX(0.8033);"><u>I</u>con Sets</div>
<div style="position:absolute;top:258.50px;font-size:9.8px;line-height:9.8px;color:#201f1e;white-space:nowrap;-webkit-text-stroke:0.22px #201f1e;left:550.00px;transform-origin:0 0;transform:scaleX(0.7897);"><u>N</u>ew Rule...</div>
<div style="position:absolute;top:278.20px;font-size:9.8px;line-height:9.8px;color:#201f1e;white-space:nowrap;-webkit-text-stroke:0.22px #201f1e;left:550.00px;transform-origin:0 0;transform:scaleX(0.7617);"><u>C</u>lear Rules</div>
<div style="position:absolute;top:296.20px;font-size:9.8px;line-height:9.8px;color:#201f1e;white-space:nowrap;-webkit-text-stroke:0.22px #201f1e;left:550.00px;transform-origin:0 0;transform:scaleX(0.7987);">Manage <u>R</u>ules...</div>
<svg style="position:absolute;left:643.9px;top:97.2px;" width="5.2" height="8.4" viewBox="0 0 5.2 8.4"><polyline points="1,1 4.2,4.2 1,7.4" fill="none" stroke="#484644" stroke-width="1.0"/></svg>
<svg style="position:absolute;left:643.9px;top:130.20000000000002px;" width="5.2" height="8.4" viewBox="0 0 5.2 8.4"><polyline points="1,1 4.2,4.2 1,7.4" fill="none" stroke="#484644" stroke-width="1.0"/></svg>
<svg style="position:absolute;left:643.9px;top:164.60000000000002px;" width="5.2" height="8.4" viewBox="0 0 5.2 8.4"><polyline points="1,1 4.2,4.2 1,7.4" fill="none" stroke="#484644" stroke-width="1.0"/></svg>
<svg style="position:absolute;left:643.9px;top:197.5px;" width="5.2" height="8.4" viewBox="0 0 5.2 8.4"><polyline points="1,1 4.2,4.2 1,7.4" fill="none" stroke="#484644" stroke-width="1.0"/></svg>
<svg style="position:absolute;left:643.9px;top:230.4px;" width="5.2" height="8.4" viewBox="0 0 5.2 8.4"><polyline points="1,1 4.2,4.2 1,7.4" fill="none" stroke="#484644" stroke-width="1.0"/></svg>
<svg style="position:absolute;left:643.9px;top:277.8px;" width="5.2" height="8.4" viewBox="0 0 5.2 8.4"><polyline points="1,1 4.2,4.2 1,7.4" fill="none" stroke="#484644" stroke-width="1.0"/></svg>
<svg style="position:absolute;left:666.2px;top:94.2px;" width="21" height="19" viewBox="0 0 21 19"><rect x="0.6" y="0.6" width="18.3" height="14.0" rx="1.4" fill="#fff"/><rect x="5.3" y="5.4" width="9.4" height="4.9" fill="#fcc566"/><path d="M5.3,0.6 V14.6" stroke="#9a9896" stroke-width="0.8"/><path d="M14.7,0.6 V14.6" stroke="#9a9896" stroke-width="0.8"/><path d="M0.6,5.4 H18.9" stroke="#9a9896" stroke-width="0.8"/><path d="M0.6,10.3 H18.9" stroke="#9a9896" stroke-width="0.8"/><rect x="0.6" y="0.6" width="18.3" height="14.0" rx="1.4" fill="none" stroke="#5c5b5a" stroke-width="1.0"/><rect x="8.7" y="9.5" width="11.4" height="8.6" rx="1.1" fill="#fff" stroke="#5c5b5a" stroke-width="1.1"/><path d="M12.6,11.6 L16.6,13.8 L12.6,16" fill="none" stroke="#2b2a29" stroke-width="0.95"/></svg>
<svg style="position:absolute;left:666.2px;top:127.2px;" width="21" height="19" viewBox="0 0 21 19"><rect x="0.6" y="0.6" width="18.3" height="14.0" rx="1.4" fill="#fff"/><rect x="5.3" y="5.4" width="9.4" height="4.9" fill="#fcc566"/><path d="M5.3,0.6 V14.6" stroke="#9a9896" stroke-width="0.8"/><path d="M14.7,0.6 V14.6" stroke="#9a9896" stroke-width="0.8"/><path d="M0.6,5.4 H18.9" stroke="#9a9896" stroke-width="0.8"/><path d="M0.6,10.3 H18.9" stroke="#9a9896" stroke-width="0.8"/><rect x="0.6" y="0.6" width="18.3" height="14.0" rx="1.4" fill="none" stroke="#5c5b5a" stroke-width="1.0"/><rect x="8.7" y="9.5" width="11.4" height="8.6" rx="1.1" fill="#fff" stroke="#5c5b5a" stroke-width="1.1"/><path d="M16.4,11.6 L12.4,13.8 L16.4,16" fill="none" stroke="#2b2a29" stroke-width="0.95"/></svg>
<svg style="position:absolute;left:666.2px;top:160.4px;" width="21" height="16.5" viewBox="0 0 21 16.5"><rect x="0.6" y="0.6" width="18.3" height="14.0" rx="1.4" fill="#fff"/><rect x="0.8" y="0.8" width="4.5" height="4.6" fill="#3f94e6"/><rect x="14.7" y="0.8" width="4.2" height="4.6" fill="#3f94e6"/><rect x="5.3" y="5.4" width="9.4" height="4.9" fill="#fcc566"/><path d="M5.3,0.6 V14.6" stroke="#9a9896" stroke-width="0.8"/><path d="M14.7,0.6 V14.6" stroke="#9a9896" stroke-width="0.8"/><path d="M0.6,5.4 H18.9" stroke="#9a9896" stroke-width="0.8"/><path d="M0.6,10.3 H18.9" stroke="#9a9896" stroke-width="0.8"/><rect x="0.6" y="0.6" width="18.3" height="14.0" rx="1.4" fill="none" stroke="#5c5b5a" stroke-width="1.0"/><path d="M0.6,0.9 H5.3 M14.7,0.9 H18.9" stroke="#2b7cd3" stroke-width="1.2"/></svg>
<svg style="position:absolute;left:666.2px;top:193.2px;" width="21" height="19" viewBox="0 0 21 19"><rect x="0.6" y="0.6" width="18.3" height="14.0" rx="1.4" fill="#fff"/><rect x="5.3" y="5.4" width="9.4" height="4.9" fill="#fcc566"/><path d="M5.3,0.6 V14.6" stroke="#9a9896" stroke-width="0.8"/><path d="M14.7,0.6 V14.6" stroke="#9a9896" stroke-width="0.8"/><path d="M0.6,5.4 H18.9" stroke="#9a9896" stroke-width="0.8"/><path d="M0.6,10.3 H18.9" stroke="#9a9896" stroke-width="0.8"/><rect x="0.6" y="0.6" width="18.3" height="14.0" rx="1.4" fill="none" stroke="#5c5b5a" stroke-width="1.0"/><rect x="8.7" y="9.5" width="11.4" height="8.6" rx="1.1" fill="#fff" stroke="#5c5b5a" stroke-width="1.1"/><path d="M12.2,12.7 H16.8 M12.2,15 H16.8" fill="none" stroke="#2b2a29" stroke-width="0.95"/></svg>
<svg style="position:absolute;left:666.2px;top:226.2px;" width="21" height="19" viewBox="0 0 21 19"><rect x="0.6" y="0.6" width="18.3" height="14.0" rx="1.4" fill="#fff"/><rect x="5.3" y="5.4" width="9.4" height="4.9" fill="#fcc566"/><path d="M5.3,0.6 V14.6" stroke="#9a9896" stroke-width="0.8"/><path d="M14.7,0.6 V14.6" stroke="#9a9896" stroke-width="0.8"/><path d="M0.6,5.4 H18.9" stroke="#9a9896" stroke-width="0.8"/><path d="M0.6,10.3 H18.9" stroke="#9a9896" stroke-width="0.8"/><rect x="0.6" y="0.6" width="18.3" height="14.0" rx="1.4" fill="none" stroke="#5c5b5a" stroke-width="1.0"/><rect x="8.7" y="9.5" width="11.4" height="8.6" rx="1.1" fill="#fff" stroke="#5c5b5a" stroke-width="1.1"/><text x="14.4" y="16.3" font-family="Liberation Sans, sans-serif" font-size="7.6" text-anchor="middle" fill="#2b2a29">a</text></svg>
<svg style="position:absolute;left:666.2px;top:259.2px;" width="21" height="19" viewBox="0 0 21 19"><rect x="0.6" y="0.6" width="18.3" height="14.0" rx="1.4" fill="#fff"/><rect x="5.3" y="5.4" width="9.4" height="4.9" fill="#fcc566"/><path d="M5.3,0.6 V14.6" stroke="#9a9896" stroke-width="0.8"/><path d="M14.7,0.6 V14.6" stroke="#9a9896" stroke-width="0.8"/><path d="M0.6,5.4 H18.9" stroke="#9a9896" stroke-width="0.8"/><path d="M0.6,10.3 H18.9" stroke="#9a9896" stroke-width="0.8"/><rect x="0.6" y="0.6" width="18.3" height="14.0" rx="1.4" fill="none" stroke="#5c5b5a" stroke-width="1.0"/><rect x="8.7" y="9.5" width="11.4" height="8.6" rx="1.1" fill="#fff" stroke="#5c5b5a" stroke-width="1.1"/><path d="M8.7,12 H20.1" stroke="#5c5b5a" stroke-width="1"/></svg>
<svg style="position:absolute;left:666.2px;top:292.4px;" width="21" height="16.5" viewBox="0 0 21 16.5"><rect x="0.6" y="0.6" width="18.3" height="14.0" rx="1.4" fill="#fff"/><rect x="5.3" y="0.6" width="9.4" height="14" fill="#fcc566"/><path d="M5.3,0.6 V14.6" stroke="#9a9896" stroke-width="0.8"/><path d="M14.7,0.6 V14.6" stroke="#9a9896" stroke-width="0.8"/><path d="M0.6,5.4 H18.9" stroke="#9a9896" stroke-width="0.8"/><path d="M0.6,10.3 H18.9" stroke="#9a9896" stroke-width="0.8"/><rect x="0.6" y="0.6" width="18.3" height="14.0" rx="1.4" fill="none" stroke="#5c5b5a" stroke-width="1.0"/></svg>
<div style="position:absolute;top:99.50px;font-size:9.8px;line-height:9.8px;color:#201f1e;white-space:nowrap;-webkit-text-stroke:0.22px #201f1e;font-weight:bold;left:691.60px;transform-origin:0 0;transform:scaleX(0.8241);"><u>G</u>reater Than...</div>
<div style="position:absolute;top:132.00px;font-size:9.8px;line-height:9.8px;color:#201f1e;white-space:nowrap;-webkit-text-stroke:0.22px #201f1e;font-weight:bold;left:691.60px;transform-origin:0 0;transform:scaleX(0.7592);"><u>L</u>ess Than...</div>
<div style="position:absolute;top:164.70px;font-size:9.8px;line-height:9.8px;color:#201f1e;white-space:nowrap;-webkit-text-stroke:0.22px #201f1e;font-weight:bold;left:691.60px;transform-origin:0 0;transform:scaleX(0.8541);"><u>B</u>etween...</div>
<div style="position:absolute;top:197.50px;font-size:9.8px;line-height:9.8px;color:#201f1e;white-space:nowrap;-webkit-text-stroke:0.22px #201f1e;font-weight:bold;left:691.60px;transform-origin:0 0;transform:scaleX(0.7722);"><u>E</u>qual To...</div>
<div style="position:absolute;top:231.20px;font-size:9.8px;line-height:9.8px;color:#201f1e;white-space:nowrap;-webkit-text-stroke:0.22px #201f1e;font-weight:bold;left:691.60px;transform-origin:0 0;transform:scaleX(0.8179);"><u>T</u>ext that Contains...</div>
<div style="position:absolute;top:264.20px;font-size:9.8px;line-height:9.8px;color:#201f1e;white-space:nowrap;-webkit-text-stroke:0.22px #201f1e;font-weight:bold;left:691.40px;transform-origin:0 0;transform:scaleX(0.8179);"><u>A</u> Date Occurring...</div>
<div style="position:absolute;top:296.70px;font-size:9.8px;line-height:9.8px;color:#201f1e;white-space:nowrap;-webkit-text-stroke:0.22px #201f1e;font-weight:bold;left:691.40px;transform-origin:0 0;transform:scaleX(0.8088);"><u>D</u>uplicate Values...</div>
<div style="position:absolute;top:323.40px;font-size:9.8px;line-height:9.8px;color:#201f1e;white-space:nowrap;-webkit-text-stroke:0.22px #201f1e;left:681.00px;transform-origin:0 0;transform:scaleX(0.7894);"><u>M</u>ore Rules...</div>
<div style="position:absolute;left:26.2px;top:10.2px;width:52.599999999999994px;height:24.2px;background:none;border:3.6px solid #e6161e;box-shadow:1px 1.5px 2px rgba(0,0,0,.35), inset 0.5px 1px 1.5px rgba(0,0,0,.22);"></div>
<div style="position:absolute;left:518px;top:27.3px;width:66px;height:58.7px;background:none;border:4.7px solid #e6161e;box-shadow:1px 1.5px 2px rgba(0,0,0,.35), inset 0.5px 1px 1.5px rgba(0,0,0,.22);"></div>
<div style="position:absolute;left:523.5px;top:251px;width:132.5px;height:27.600000000000023px;background:none;border:4.7px solid #e6161e;box-shadow:1px 1.5px 2px rgba(0,0,0,.35), inset 0.5px 1px 1.5px rgba(0,0,0,.22);"></div>
<svg style="position:absolute;left:0;top:0" width="800" height="500" viewBox="0 0 800 500">
<defs><filter id="sh" x="-20%" y="-20%" width="140%" height="140%"><feDropShadow dx="0.8" dy="1.2" stdDeviation="1.2" flood-color="#000" flood-opacity="0.45"/></filter></defs>
<g filter="url(#sh)" stroke="#fff" stroke-width="5.6" stroke-linejoin="round" fill="#fff">
<polygon points="52,45 66.5,68.5 59.2,68.5 66.3,149.5 51.5,69.5 44,71.5"/>
<polygon points="409,85.2 484.5,62.5 480.5,56 508,60.5 486.5,77.5 485.5,71 409,87.2"/>
<polygon points="414,239 491.5,251.5 490.5,245 513.5,260.5 486,266.5 488.5,260 414,241.5"/>
</g>
<g fill="#f20d14">
<polygon points="52,45 66.5,68.5 59.2,68.5 66.3,149.5 51.5,69.5 44,71.5"/>
<polygon points="409,85.2 484.5,62.5 480.5,56 508,60.5 486.5,77.5 485.5,71 409,87.2"/>
<polygon points="414,239 491.5,251.5 490.5,245 513.5,260.5 486,266.5 488.5,260 414,241.5"/>
</g>
<g filter="url(#sh)"><circle cx="69.4" cy="164.8" r="11" fill="#fff"/><circle cx="396.7" cy="86.5" r="10.6" fill="#fff"/><circle cx="395" cy="233.6" r="10.6" fill="#fff"/></g>
<g fill="#0b0be0"><circle cx="69.4" cy="164.8" r="8.7"/><circle cx="396.7" cy="86.5" r="8.6"/><circle cx="395" cy="233.6" r="8.6"/></g>
<g transform="scale(1.0005,1)" font-family="Liberation Sans, sans-serif" font-weight="bold" font-size="11.5" fill="#fff" text-anchor="middle">
<text x="69.4" y="169">1</text><text x="396.7" y="90.7">2</text><text x="395" y="237.8">3</text></g>
</svg>
<svg style="position:absolute;left:636px;top:446px" width="164" height="50" viewBox="636 446 164 50">
<path d="M649,458.5 H665.5 C664.5,468 662,476 656.5,481.5 H640.6 C640.2,472 643,463 649,458.5 Z" fill="#1a5fb4"/>
<path d="M668,450.6 H685.7 C685.5,466 683,481 675.5,491 H658.7 C658.5,476 661,461 668,450.6 Z" fill="#f37021"/>
<path d="M689.5,458.5 H705.5 C705,467 702,476 697,481.5 H681 C681.5,472 684,463 689.5,458.5 Z" fill="#3fae49"/>
<g font-family="Liberation Sans, sans-serif" font-weight="bold" font-style="italic" font-size="15.6" fill="#fff">
<text transform="translate(642.6,476.4) scale(1.42,1)">F</text><text transform="translate(662.6,476.4) scale(1.3,1)">P</text><text transform="translate(683.8,476.4) scale(1.42,1)">T</text></g>
<circle cx="706" cy="481" r="1.7" fill="none" stroke="#1a5fb4" stroke-width="0.7"/>
</svg>
<div style="position:absolute;top:461.02px;font-size:18.4px;line-height:18.4px;color:#111;white-space:nowrap;font-weight:bold;left:710.40px;transform-origin:0 0;transform:scaleX(0.9306);">Shop</div>
<div style="position:absolute;top:467.80px;font-size:10.4px;line-height:10.4px;color:#111;white-space:nowrap;-webkit-text-stroke:0.22px #111;font-weight:bold;left:753.60px;transform-origin:0 0;transform:scaleX(0.9160);">.com.vn</div>
</div></body></html>
